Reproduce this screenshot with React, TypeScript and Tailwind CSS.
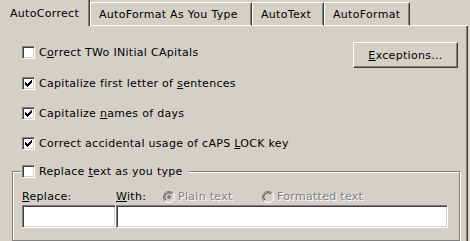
import React from 'react';

const font = { fontFamily: '"DejaVu Sans", Verdana, sans-serif' };

function CheckBox({ checked }: { checked?: boolean }) {
  return (
    <span className="flex h-[13px] w-[13px] shrink-0 items-center justify-center border border-t-[#808080] border-l-[#808080] border-b-white border-r-white bg-white shadow-[inset_1px_1px_0_#404040,inset_-1px_-1px_0_#d4d0c8]">
      {checked && (
        <svg width="7" height="7" viewBox="0 0 7 7" shapeRendering="crispEdges">
          <path
            d="M0 2h1v3H0z M1 3h1v3H1z M2 4h1v3H2z M3 3h1v3H3z M4 2h1v3H4z M5 1h1v3H5z M6 0h1v3H6z"
            fill="#000"
          />
        </svg>
      )}
    </span>
  );
}

function Radio({ checked }: { checked?: boolean }) {
  return (
    <svg width="12" height="12" viewBox="0 0 12 12" className="shrink-0">
      <circle cx="6" cy="6" r="5.5" fill="#d4d0c8" />
      <path d="M10 2 A5.5 5.5 0 0 0 2 10" fill="none" stroke="#808080" strokeWidth="1" />
      <path d="M2 10 A5.5 5.5 0 0 0 10 2" fill="none" stroke="#ffffff" strokeWidth="1" />
      <path d="M9 3 A4.2 4.2 0 0 0 3 9" fill="none" stroke="#404040" strokeWidth="1" />
      {checked && <circle cx="6" cy="6" r="2" fill="#808080" />}
    </svg>
  );
}

function CheckRow({ checked, children }: { checked?: boolean; children: React.ReactNode }) {
  return (
    <div className="flex h-[13px] items-center">
      <CheckBox checked={checked} />
      <span className="ml-[4px] whitespace-nowrap text-[11px] leading-[13px] text-black">{children}</span>
    </div>
  );
}

function Tab({ label }: { label: string }) {
  return (
    <div className="flex h-[24px] items-center rounded-tr-[2px] border-t border-l border-r border-b border-t-white border-l-white border-r-[#404040] border-b-white px-[8px] shadow-[inset_-1px_0_0_#808080]">
      <span className="text-[11px] leading-[13px] text-black whitespace-nowrap">{label}</span>
    </div>
  );
}

const inputCls =
  'h-[23px] border border-t-[#808080] border-l-[#808080] border-b-white border-r-white bg-white shadow-[inset_1px_1px_0_#404040,inset_-1px_-1px_0_#d4d0c8]';

const disabledText = 'text-[11px] leading-[13px] text-[#808080] [text-shadow:1px_1px_0_#fff] whitespace-nowrap';

export default function App() {
  return (
    <div className="h-[241px] w-[470px] overflow-hidden bg-[#d4d0c8] tracking-[0.3px]" style={font}>
      {/* tab strip */}
      <div className="flex h-[26px] w-[468px] items-end">
        <div className="flex h-[26px] w-[90px] items-center border-r border-r-[#404040] pl-[10px] shadow-[inset_-1px_0_0_#808080]">
          <span className="text-[11px] leading-[13px] text-black">AutoCorrect</span>
        </div>
        <div className="w-[162px]">
          <Tab label="AutoFormat As You Type" />
        </div>
        <div className="w-[72px]">
          <Tab label="AutoText" />
        </div>
        <div className="w-[86px]">
          <Tab label="AutoFormat" />
        </div>
        <div className="h-[1px] flex-1 bg-white" />
      </div>

      {/* panel */}
      <div className="flex h-[215px] w-[468px] flex-col border-r border-r-[#404040] shadow-[inset_-1px_0_0_#808080]">
        <div className="ml-[22px] mr-[9px] mt-[16px] flex h-[26px] items-start">
          <div className="mt-[4px]">
            <CheckRow>
              C<u className="underline-offset-[1px]">o</u>rrect TWo INitial CApitals
            </CheckRow>
          </div>
          <button className="ml-auto flex h-[26px] w-[105px] items-center justify-center border border-t-white border-l-white border-b-[#404040] border-r-[#404040] bg-[#d4d0c8] shadow-[inset_-1px_-1px_0_#808080] text-[11px] leading-[13px] text-black">
            <span>
              <u className="underline-offset-[1px]">E</u>xceptions...
            </span>
          </button>
        </div>

        <div className="ml-[22px] mt-[9px]">
          <CheckRow checked>
            Capitalize first letter of <u className="underline-offset-[1px]">s</u>entences
          </CheckRow>
        </div>
        <div className="ml-[22px] mt-[17px]">
          <CheckRow checked>
            Capitalize <u className="underline-offset-[1px]">n</u>ames of days
          </CheckRow>
        </div>
        <div className="ml-[22px] mt-[17px]">
          <CheckRow checked>
            Correct accidental usage of cAPS <u className="underline-offset-[1px]">L</u>OCK key
          </CheckRow>
        </div>

        {/* group box */}
        <div className="relative ml-[12px] mt-[21px] h-[80px] w-[448px] border border-[#808080] pl-[9px] pt-[18px] shadow-[inset_1px_1px_0_#fff,1px_1px_0_#fff]">
          <div className="absolute left-[8px] top-[-7px] w-[168px] bg-[#d4d0c8] pl-[1px]">
            <CheckRow>
              Replace <u className="underline-offset-[1px]">t</u>ext as you type
            </CheckRow>
          </div>

          <div className="flex h-[13px] items-center">
            <span className="w-[94px] text-[11px] leading-[13px] text-black">
              <u className="underline-offset-[1px]">R</u>eplace:
            </span>
            <span className="w-[47px] text-[11px] leading-[13px] text-black">
              <u className="underline-offset-[1px]">W</u>ith:
            </span>
            <div className="flex w-[99px] items-center">
              <Radio checked />
              <span className={`ml-[3px] ${disabledText}`}>Plain text</span>
            </div>
            <div className="flex items-center">
              <Radio />
              <span className={`ml-[3px] ${disabledText}`}>Formatted text</span>
            </div>
          </div>

          <div className="mt-[2px] flex">
            <div className={`w-[94px] ${inputCls}`} />
            <div className={`w-[332px] ${inputCls}`} />
          </div>
        </div>
      </div>
    </div>
  );
}
